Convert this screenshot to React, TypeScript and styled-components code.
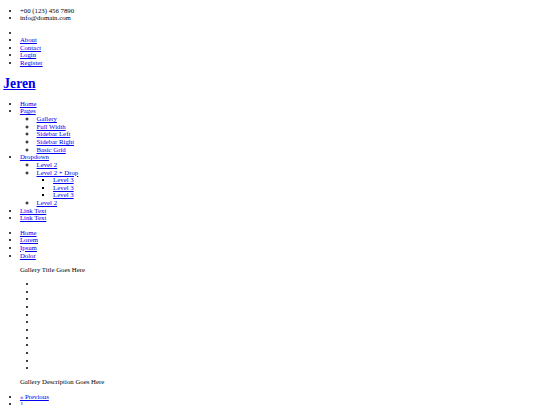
import React from "react";
import styled, { createGlobalStyle } from "styled-components";

const S = 0.415;
const px = (v: number) => `${(v * S).toFixed(3)}px`;

const Global = createGlobalStyle`
  html, body {
    background: #ffffff;
  }
  body {
    margin: 0 ${px(8)} ${px(8)};
    font-family: "Liberation Serif", "Times New Roman", serif;
    font-size: 6.8px;
    line-height: ${px(18.4)};
    color: #000000;
  }
`;

const List = styled.ul`
  margin: ${px(16)} 0;
  padding-left: ${px(40)};
  list-style-type: disc;
`;

const SubList = styled.ul<{ $level: number }>`
  margin: 0;
  padding-left: ${px(40)};
  list-style-type: ${(p) => (p.$level === 2 ? "circle" : "square")};
`;

const Item = styled.li`
  min-height: ${px(18.4)};
`;

const Anchor = styled.a`
  color: #0000ee;
  text-decoration: underline;
`;

const SiteTitle = styled.h1`
  margin: ${px(21.44)} 0;
  font-size: 13.6px;
  line-height: ${px(36.8)};
  font-weight: bold;
`;

const Figure = styled.figure`
  margin: ${px(16)} ${px(40)};
`;

const Caption = styled.div``;

const topLinks = ["About", "Contact", "Login", "Register"];
const galleryPages = ["Gallery", "Full Width", "Sidebar Left", "Sidebar Right", "Basic Grid"];
const breadcrumbs = ["Home", "Lorem", "Ipsum", "Dolor"];

export default function App() {
  return (
    <>
      <Global />
      <List>
        <Item>+00 (123) 456 7890</Item>
        <Item>info@domain.com</Item>
      </List>
      <List>
        <Item />
        {topLinks.map((l) => (
          <Item key={l}>
            <Anchor href="#">{l}</Anchor>
          </Item>
        ))}
      </List>
      <SiteTitle>
        <Anchor href="#">Jeren</Anchor>
      </SiteTitle>
      <List>
        <Item>
          <Anchor href="#">Home</Anchor>
        </Item>
        <Item>
          <Anchor href="#">Pages</Anchor>
          <SubList $level={2}>
            {galleryPages.map((p) => (
              <Item key={p}>
                <Anchor href="#">{p}</Anchor>
              </Item>
            ))}
          </SubList>
        </Item>
        <Item>
          <Anchor href="#">Dropdown</Anchor>
          <SubList $level={2}>
            <Item>
              <Anchor href="#">Level 2</Anchor>
            </Item>
            <Item>
              <Anchor href="#">Level 2 + Drop</Anchor>
              <SubList $level={3}>
                <Item>
                  <Anchor href="#">Level 3</Anchor>
                </Item>
                <Item>
                  <Anchor href="#">Level 3</Anchor>
                </Item>
                <Item>
                  <Anchor href="#">Level 3</Anchor>
                </Item>
              </SubList>
            </Item>
            <Item>
              <Anchor href="#">Level 2</Anchor>
            </Item>
          </SubList>
        </Item>
        <Item>
          <Anchor href="#">Link Text</Anchor>
        </Item>
        <Item>
          <Anchor href="#">Link Text</Anchor>
        </Item>
      </List>
      <List>
        {breadcrumbs.map((b) => (
          <Item key={b}>
            <Anchor href="#">{b}</Anchor>
          </Item>
        ))}
      </List>
      <Figure>
        <Caption>Gallery Title Goes Here</Caption>
        <List>
          {Array.from({ length: 12 }).map((_, i) => (
            <Item key={i} />
          ))}
        </List>
        <Caption>Gallery Description Goes Here</Caption>
      </Figure>
      <List>
        <Item>
          <Anchor href="#">« Previous</Anchor>
        </Item>
        <Item>
          <Anchor href="#">1</Anchor>
        </Item>
        <Item>
          <Anchor href="#">2</Anchor>
        </Item>
        <Item>
          <Anchor href="#">Next »</Anchor>
        </Item>
      </List>
    </>
  );
}
